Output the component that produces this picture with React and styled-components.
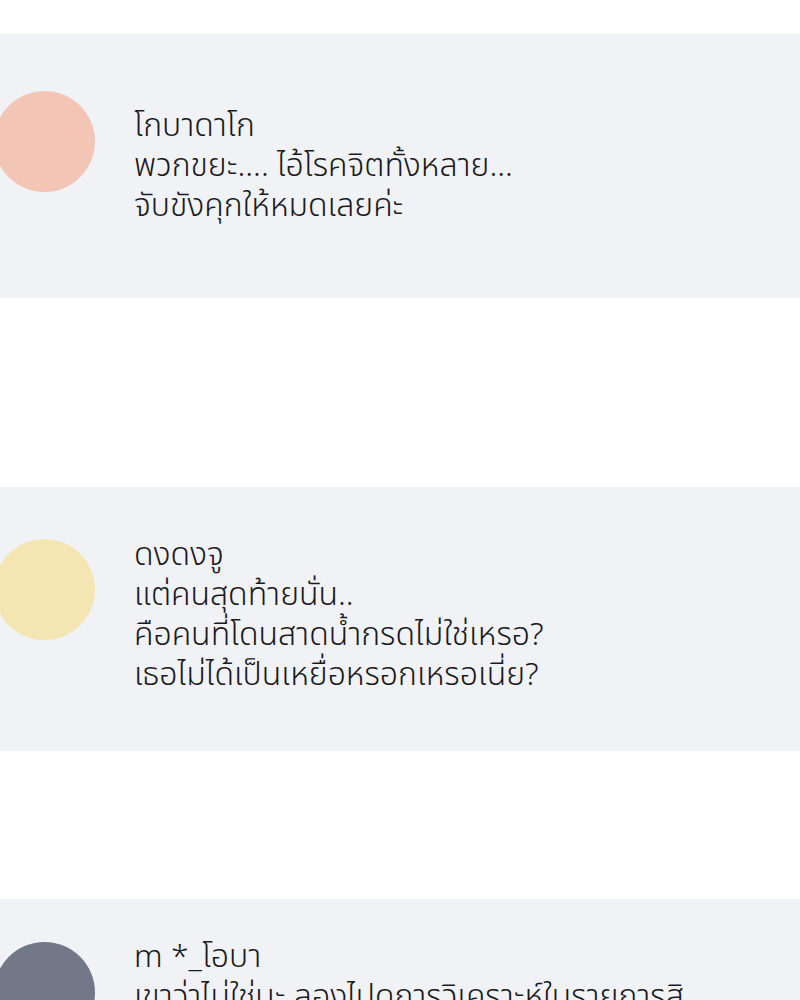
import styled, { createGlobalStyle } from "styled-components"

const GlobalStyle = createGlobalStyle`
  html, body {
    margin: 0;
    padding: 0;
    background: #ffffff;
  }
  body {
    font-family: "Noto Sans Thai", "Noto Sans", "DejaVu Sans", sans-serif;
    overflow: hidden;
  }
`

const Page = styled.div`
  width: 800px;
  height: 1000px;
  overflow: hidden;
  padding-top: 34px;
  box-sizing: border-box;
`

const Panel = styled.section`
  box-sizing: border-box;
  height: ${(props) => props.$height || 264}px;
  margin-top: ${(props) => props.$gap || 0}px;
  padding-bottom: ${(props) => props.$lift || 0}px;
  background: #f1f2f6;
  display: flex;
  align-items: center;
  gap: 39px;
`

const Avatar = styled.div`
  flex: none;
  width: 101px;
  height: 101px;
  border-radius: 50%;
  margin-left: -6px;
  margin-bottom: 50px;
  background: ${(props) => props.$color};
`

const Lines = styled.div`
  font-size: 32px;
  font-weight: 300;
  line-height: 40px;
  color: #1a1a1c;
  white-space: nowrap;
`

const comments = [
  {
    color: "#f2c5b5",
    gap: 0,
    lines: ["โกบาดาโก", "พวกขยะ.... ไอ้โรคจิตทั้งหลาย...", "จับขังคุกให้หมดเลยค่ะ"],
  },
  {
    color: "#f3e6b3",
    gap: 189,
    lift: 9,
    lines: [
      "ดงดงจู",
      "แต่คนสุดท้ายนั่น..",
      "คือคนที่โดนสาดน้ำกรดไม่ใช่เหรอ?",
      "เธอไม่ได้เป็นเหยื่อหรอกเหรอเนี่ย?",
    ],
  },
  {
    color: "#737888",
    gap: 148,
    height: 236,
    lines: [
      "m *_โอบา",
      "เขาว่าไม่ใช่นะ ลองไปดูการวิเคราะห์ในรายการสิ",
      "คนนั้นน่ะเป็นคนร้ายตัวจริงเลย",
      "น่ากลัวจริงๆ",
    ],
  },
]

export default function App() {
  return (
    <Page>
      <GlobalStyle />
      {comments.map((c, i) => (
        <Panel key={i} $gap={c.gap} $height={c.height} $lift={c.lift}>
          <Avatar $color={c.color} />
          <Lines>
            {c.lines.map((line, j) => (
              <div key={j}>{line}</div>
            ))}
          </Lines>
        </Panel>
      ))}
    </Page>
  )
}
